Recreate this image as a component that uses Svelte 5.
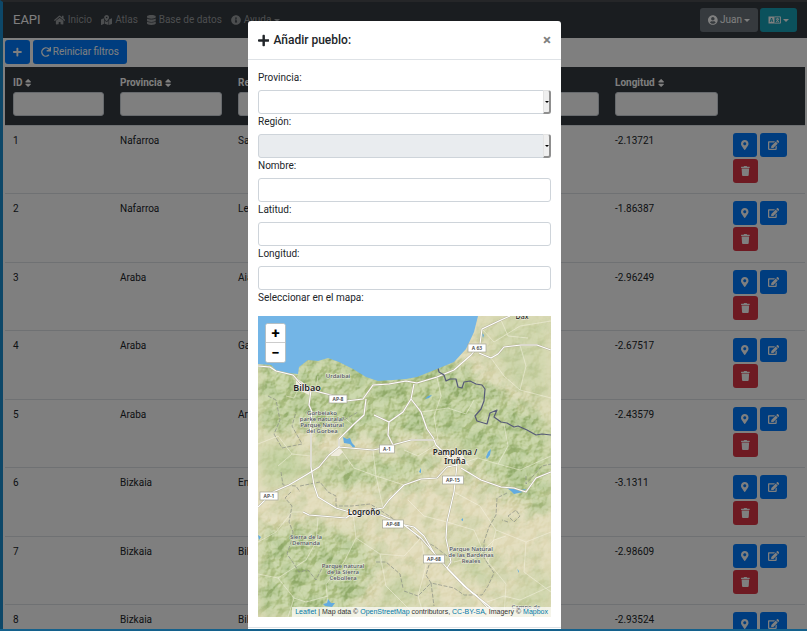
<script>
  const icons = {
    plus: ['0 0 448 512', 'M416 208H272V64c0-17.67-14.33-32-32-32h-32c-17.67 0-32 14.33-32 32v144H32c-17.67 0-32 14.33-32 32v32c0 17.67 14.33 32 32 32h144v144c0 17.67 14.33 32 32 32h32c17.67 0 32-14.33 32-32V304h144c17.67 0 32-14.33 32-32v-32c0-17.67-14.33-32-32-32z'],
    pin: ['0 0 384 512', 'M172.268 501.67C26.97 291.031 0 269.413 0 192 0 85.961 85.961 0 192 0s192 85.961 192 192c0 77.413-26.97 99.031-172.268 309.67-9.535 13.774-29.93 13.773-39.464 0zM192 272c44.183 0 80-35.817 80-80s-35.817-80-80-80-80 35.817-80 80 35.817 80 80 80z'],
    edit: ['0 0 576 512', 'M402.6 83.2l90.2 90.2c3.8 3.8 3.8 10 0 13.8L274.4 405.6l-92.8 10.3c-12.4 1.4-22.9-9.1-21.5-21.5l10.3-92.8L388.8 83.2c3.8-3.8 10-3.8 13.8 0zm162-22.9l-48.8-48.8c-15.2-15.2-39.9-15.2-55.2 0l-35.4 35.4c-3.8 3.8-3.8 10 0 13.8l90.2 90.2c3.8 3.8 10 3.8 13.8 0l35.4-35.4c15.2-15.3 15.2-40 0-55.2zM384 346.2V448H64V128h229.8c3.2 0 6.2-1.3 8.5-3.5l40-40c7.6-7.6 2.2-20.5-8.5-20.5H48C21.5 64 0 85.5 0 112v352c0 26.5 21.5 48 48 48h352c26.5 0 48-21.5 48-48V306.2c0-10.7-12.9-16-20.5-8.5l-40 40c-2.2 2.3-3.5 5.3-3.5 8.5z'],
    trash: ['0 0 448 512', 'M432 32H312l-9.4-18.7A24 24 0 0 0 281.1 0H166.8a23.72 23.72 0 0 0-21.4 13.3L136 32H16A16 16 0 0 0 0 48v32a16 16 0 0 0 16 16h416a16 16 0 0 0 16-16V48a16 16 0 0 0-16-16zM53.2 467a48 48 0 0 0 47.9 45h245.8a48 48 0 0 0 47.9-45L416 128H32z'],
    home: ['0 0 576 512', 'M280.37 148.26L96 300.11V464a16 16 0 0 0 16 16l112.06-.29a16 16 0 0 0 15.92-16V368a16 16 0 0 1 16-16h64a16 16 0 0 1 16 16v95.64a16 16 0 0 0 16 16.05L464 480a16 16 0 0 0 16-16V300L295.67 148.26a12.19 12.19 0 0 0-15.3 0zM571.6 251.47L488 182.56V44.05a12 12 0 0 0-12-12h-56a12 12 0 0 0-12 12v72.61L318.47 43a48 48 0 0 0-61 0L4.34 251.47a12 12 0 0 0-1.6 16.9l25.5 31A12 12 0 0 0 45.15 301l235.22-193.74a12.19 12.19 0 0 1 15.3 0L530.9 301a12 12 0 0 0 16.9-1.6l25.5-31a12 12 0 0 0-1.7-16.93z'],
    atlas: ['0 0 576 512', 'M288 0c-69.59 0-126 56.41-126 126 0 56.26 82.35 158.8 113.9 196.02 6.39 7.54 17.82 7.54 24.2 0C331.65 284.8 414 182.26 414 126 414 56.41 357.59 0 288 0zm0 168c-23.2 0-42-18.8-42-42s18.8-42 42-42 42 18.8 42 42-18.8 42-42 42zM20.12 215.95A32.006 32.006 0 0 0 0 245.66v250.32c0 11.32 11.43 19.06 21.94 14.86L160 448V214.92c-8.84-15.98-16.07-31.54-21.25-46.42L20.12 215.95zM288 359.67c-14.07 0-27.38-6.18-36.51-16.96-19.66-23.2-40.57-49.62-59.49-76.72v182l192 64V266c-18.92 27.09-39.82 53.52-59.49 76.72-9.13 10.77-22.44 16.95-36.51 16.95zm266.06-198.51L416 224v288l139.88-55.95A31.996 31.996 0 0 0 576 426.34V176.02c0-11.32-11.43-19.06-21.94-14.86z'],
    database: ['0 0 448 512', 'M448 73.143v45.714C448 159.143 347.667 192 224 192S0 159.143 0 118.857V73.143C0 32.857 100.333 0 224 0s224 32.857 224 73.143zM448 176v102.857C448 319.143 347.667 352 224 352S0 319.143 0 278.857V176c48.125 33.143 136.208 48.572 224 48.572S399.874 209.143 448 176zm0 160v102.857C448 479.143 347.667 512 224 512S0 479.143 0 438.857V336c48.125 33.143 136.208 48.572 224 48.572S399.874 369.143 448 336z'],
    info: ['0 0 512 512', 'M256 8C119.043 8 8 119.083 8 256c0 136.997 111.043 248 248 248s248-111.003 248-248C504 119.083 392.957 8 256 8zm0 110c23.196 0 42 18.804 42 42s-18.804 42-42 42-42-18.804-42-42 18.804-42 42-42zm56 254c0 6.627-5.373 12-12 12h-88c-6.627 0-12-5.373-12-12v-24c0-6.627 5.373-12 12-12h12v-64h-12c-6.627 0-12-5.373-12-12v-24c0-6.627 5.373-12 12-12h64c6.627 0 12 5.373 12 12v100h12c6.627 0 12 5.373 12 12v24z'],
    user: ['0 0 496 512', 'M248 8C111 8 0 119 0 256s111 248 248 248 248-111 248-248S385 8 248 8zm0 96c48.6 0 88 39.4 88 88s-39.4 88-88 88-88-39.4-88-88 39.4-88 88-88zm0 344c-58.7 0-111.3-26.6-146.5-68.2 18.8-35.4 55.6-59.8 98.5-59.8 2.4 0 4.8.4 7.1 1.1 13 4.2 26.6 6.9 40.9 6.9 14.3 0 28-2.7 40.9-6.9 2.3-.7 4.7-1.1 7.1-1.1 42.9 0 79.7 24.4 98.5 59.8C359.3 421.4 306.7 448 248 448z'],
    redo: ['0 0 512 512', 'M500.33 0h-47.41a12 12 0 0 0-12 12.57l4 82.76A247.42 247.42 0 0 0 256 8C119.34 8 7.9 119.53 8 256.19 8.1 393.07 119.1 504 256 504a247.1 247.1 0 0 0 166.18-63.91 12 12 0 0 0 .48-17.43l-34-34a12 12 0 0 0-16.38-.55A176 176 0 1 1 402.1 157.8l-101.53-4.87a12 12 0 0 0-12.57 12v47.41a12 12 0 0 0 12 12h200.33a12 12 0 0 0 12-12V12a12 12 0 0 0-12-12z'],
    sort: ['0 0 320 512', 'M41 288h238c21.4 0 32.1 25.9 17 41L177 448c-9.4 9.4-24.6 9.4-33.9 0L24 329c-15.1-15.1-4.4-41 17-41zm255-105L177 64c-9.4-9.4-24.6-9.4-33.9 0L24 183c-15.1 15.1-4.4 41 17 41h238c21.4 0 32.1-25.9 17-41z']
  };

  const columns = [
    { key: 'id', label: 'ID' },
    { key: 'provincia', label: 'Provincia' },
    { key: 'region', label: 'Región' },
    { key: 'nombre', label: 'Nombre' },
    { key: 'latitud', label: 'Latitud' },
    { key: 'longitud', label: 'Longitud' }
  ];

  const rows = [
    { id: 1, provincia: 'Nafarroa', region: 'Sakana', nombre: 'Abaigar', latitud: '42.64853', longitud: '-2.13721' },
    { id: 2, provincia: 'Nafarroa', region: 'Leitzaran', nombre: 'Abaurrea', latitud: '42.90121', longitud: '-1.86387' },
    { id: 3, provincia: 'Araba', region: 'Aiara', nombre: 'Amurrio', latitud: '43.05271', longitud: '-2.96249' },
    { id: 4, provincia: 'Araba', region: 'Gasteiz', nombre: 'Gasteiz', latitud: '42.84641', longitud: '-2.67517' },
    { id: 5, provincia: 'Araba', region: 'Arabako', nombre: 'Agurain', latitud: '42.85012', longitud: '-2.43579' },
    { id: 6, provincia: 'Bizkaia', region: 'Enkarterri', nombre: 'Balmaseda', latitud: '43.19462', longitud: '-3.1311' },
    { id: 7, provincia: 'Bizkaia', region: 'Bilboaldea', nombre: 'Barakaldo', latitud: '43.29639', longitud: '-2.98609' },
    { id: 8, provincia: 'Bizkaia', region: 'Bilboaldea', nombre: 'Bilbao', latitud: '43.26271', longitud: '-2.93524' }
  ];

  const fields = [
    { id: 'nombre', label: 'Nombre:' },
    { id: 'latitud', label: 'Latitud:' },
    { id: 'longitud', label: 'Longitud:' }
  ];

  const land = 'M0 48L13 49L18 54L31 57L40 58L41 51L50 44L60 45L70 42L81 46L95 53L108 61L120 65L135 64L148 63L159 61L179 53L196 46L208 33L216 16L220 0H293V301H0Z';

  const roads = [
    'M0 50L12 51L18 55L35 59L43 68L53 74L73 79L88 85L105 83L115 69L131 68L148 65L159 67L179 61L196 54L213 39L222 28L224 13L243 4L252 0',
    'M221 37L233 42L240 38L246 31L263 29L279 29L293 34',
    'M53 74L51 89L54 96L52 109L53 119L53 151L56 169L60 181L78 192L95 197L123 199L146 209L163 222L176 237L189 252L213 276L226 286L238 296',
    'M0 191L15 176L31 169L48 159L61 151L71 139L81 131L115 134L125 132L138 128L153 124L176 124L178 129L199 149',
    'M81 131L81 123L95 109L106 99L108 83',
    'M116 99L131 106L130 119L135 129M131 106L145 96L153 83L156 68M153 83L163 96L169 113L176 123',
    'M95 197L125 192L131 184L146 169L163 163L179 162L189 151L199 149L196 176L189 206L188 222L193 246L189 252',
    'M203 152L223 164L243 171L256 172L268 176L278 162L293 156',
    'M45 196L51 199L88 202L95 197',
    'M176 237L166 220L156 211L142 208M189 252L206 270L219 280L230 292'
  ];

  const lanes = [
    'M58 74L60 60M43 68L36 82L28 80M95 109L84 100M179 61L183 80L176 100L180 124M163 96L190 92L208 98L216 84',
    'M224 13L236 26L262 10L293 5M233 42L246 60L262 74L293 82M262 29L268 50L262 74M243 4L250 20L270 22',
    'M0 128L20 120L34 138L53 140M20 150L34 138M0 226L18 216L34 196L45 196M60 202L58 226L48 244L20 262L0 258',
    'M95 197L98 222L86 246L68 268L70 290M98 222L122 238L146 240L163 222M122 238L128 270L152 294M20 262L36 282L30 301M70 280L48 286L36 282',
    'M189 206L166 200L150 184M196 176L222 190L238 214L268 226L293 216M238 214L230 246L248 268L246 301M268 226L266 256L293 276M189 206L216 214L230 246',
    'M199 149L220 142L240 148L250 130L246 108M240 148L262 154L293 140M178 129L160 140L146 134M115 134L118 160L146 169M81 131L96 152L118 160L125 192',
    'M229 286L246 280L262 284L293 270M163 222L168 250L160 280L166 301M196 246L220 240L236 224L248 220'
  ];

  const limits = [
    'M23 156L25 169L38 170L42 176M33 176L27 182L34 190L31 206L35 216L33 226L29 238L36 248L41 256L50 254L58 264L64 252',
    'M118 246L128 246L135 252L142 258L145 272M42 170L62 166L70 176L78 180L78 190L94 190L112 188L122 194L140 206L152 212L160 222L176 230L189 240',
    'M249 177L239 182L238 199L231 211L226 226L226 242L236 257L230 270L224 279L206 279L196 272L173 267L168 259L171 249L182 240M146 275L160 280L173 267L176 290',
    'M10 80L18 84L22 104L16 118L24 132L44 128L34 110L38 96M60 112L86 104L100 96M268 160L268 168L284 150L293 148M250 200l8-6l4 6l-6 6zM250 206l-6 -2'
  ];

  const shields = [
    { x: 80, y: 83, w: 18, t: 'AP-8' },
    { x: 219, y: 32, w: 18, t: 'A 63' },
    { x: 129, y: 133, w: 15, t: 'A-1' },
    { x: 11, y: 180, w: 18, t: 'AP-1' },
    { x: 195, y: 164, w: 21, t: 'AP-15' },
    { x: 135, y: 208, w: 21, t: 'AP-68' },
    { x: 176, y: 243, w: 21, t: 'AP-68' }
  ];

  const places = [
    { x: 49, y: 75, t: 'Bilbao', city: true },
    { x: 106, y: 199, t: 'Logroño' },
    { x: 197, y: 139, t: 'Pamplona /' },
    { x: 197, y: 148, t: 'Iruña' }
  ];

  const parks = [
    { x: 80, y: 62, t: 'Urdaibai' },
    { x: 64, y: 99, t: 'Gorbeiako' },
    { x: 64, y: 105, t: 'parke naturala/' },
    { x: 64, y: 111, t: 'Parque Natural' },
    { x: 64, y: 117, t: 'del Gorbea' },
    { x: 48, y: 223, t: 'Sierra de la' },
    { x: 48, y: 229, t: 'Demanda' },
    { x: 85, y: 252, t: 'Parque natural' },
    { x: 85, y: 258, t: 'de la Sierra' },
    { x: 85, y: 264, t: 'Cebollera' },
    { x: 213, y: 235, t: 'Parque Natural' },
    { x: 213, y: 241, t: 'de las Bardenas' },
    { x: 213, y: 247, t: 'Reales' },
    { x: 268, y: 293, t: 'Campo de' }
  ];
</script>

{#snippet icon(name)}
  <svg class="icon" viewBox={icons[name][0]} aria-hidden="true"><path d={icons[name][1]} /></svg>
{/snippet}

<div class="app">
  <header class="navbar">
    <a class="brand" href="#inicio">EAPI</a>
    <nav>
      <a href="#inicio">{@render icon('home')} Inicio</a>
      <a href="#atlas">{@render icon('atlas')} Atlas</a>
      <a href="#datos">{@render icon('database')} Base de datos</a>
      <a href="#ayuda">{@render icon('info')} Ayuda <span class="caret"></span></a>
    </nav>
    <button class="btn grey">{@render icon('user')} Juan <span class="caret"></span></button>
    <button class="btn teal" aria-label="Idioma">
      <svg class="lang" viewBox="0 0 26 16" aria-hidden="true">
        <path fill-rule="evenodd" d="M1 1H13V15H1ZM6 4L3.4 12H5.2L5.7 10.4H8.4L8.9 12H10.700L8.100 4ZM7 6L8 9H6.200Z" />
        <path d="M13 1.700H25V14.300H13M19 3.500V5.500M15.500 6H22.500M21 6Q20 10 16 12M17 6.500Q18 10 22 12" fill="none" stroke="currentColor" stroke-width="1.800" />
      </svg>
      <span class="caret"></span>
    </button>
  </header>

  <div class="toolbar">
    <button class="btn blue" aria-label="Añadir">{@render icon('plus')}</button>
    <button class="btn blue">{@render icon('redo')} Reiniciar filtros</button>
  </div>

  <table>
    <colgroup>
      {#each columns as c}<col class={c.key} />{/each}
      <col class="actions" />
    </colgroup>
    <thead>
      <tr>
        {#each columns as c}
          <th>
            <label for="filtro-{c.key}">{c.label} {@render icon('sort')}</label>
            <input id="filtro-{c.key}" type="text" />
          </th>
        {/each}
        <th></th>
      </tr>
    </thead>
    <tbody>
      {#each rows as r}
        <tr>
          {#each columns as c}<td>{r[c.key]}</td>{/each}
          <td>
            <div class="tools">
              <button class="btn blue" aria-label="Ver en el mapa">{@render icon('pin')}</button>
              <button class="btn blue" aria-label="Editar">{@render icon('edit')}</button>
              <button class="btn red" aria-label="Borrar">{@render icon('trash')}</button>
            </div>
          </td>
        </tr>
      {/each}
    </tbody>
  </table>
</div>

<div class="backdrop">
  <div class="modal" role="dialog" aria-labelledby="titulo" aria-modal="true">
    <div class="modal-head">
      <h1 id="titulo">{@render icon('plus')} Añadir pueblo:</h1>
      <button class="close" aria-label="Cerrar">×</button>
    </div>
    <form class="modal-body">
      <label for="provincia">Provincia:</label>
      <div class="combo">
        <select id="provincia"><option></option></select>
        <span class="drop"></span>
      </div>
      <label for="region">Región:</label>
      <div class="combo">
        <select id="region" disabled><option></option></select>
        <span class="drop"></span>
      </div>
      {#each fields as f}
        <label for={f.id}>{f.label}</label>
        <input id={f.id} type="text" />
      {/each}
      <p>Seleccionar en el mapa:</p>
      <div class="map">
        <svg viewBox="0 0 293 301" preserveAspectRatio="xMidYMid slice" role="img" aria-label="Mapa">
          <defs>
            <clipPath id="land"><path d={land} /></clipPath>
            <filter id="soft" x="-20%" y="-20%" width="140%" height="140%"><feGaussianBlur stdDeviation="8" /></filter>
            <filter id="woods" x="0" y="0" width="100%" height="100%">
              <feTurbulence type="fractalNoise" baseFrequency="0.06" numOctaves="4" seed="8" result="n" />
              <feColorMatrix in="n" values="0 0 0 0 0  0 0 0 0 0  0 0 0 0 0  4 0 0 0 -1.700" result="m" />
              <feComposite in="SourceGraphic" in2="m" operator="in" />
            </filter>
            <filter id="relief" x="0" y="0" width="100%" height="100%" color-interpolation-filters="sRGB">
              <feTurbulence type="fractalNoise" baseFrequency="0.09" numOctaves="4" seed="21" result="n" />
              <feColorMatrix in="n" values="0 0 0 0 0  0 0 0 0 0  0 0 0 0 0  1 0 0 0 0" />
              <feDiffuseLighting surfaceScale="7" diffuseConstant="0.8" lighting-color="#ffffff">
                <feDistantLight azimuth="225" elevation="42" />
              </feDiffuseLighting>
            </filter>
            <mask id="hills">
              <g filter="url(#soft)" fill="#fff">
                <rect width="293" height="301" fill="#606060" />
                <path d="M0 40H190L293 100V160L200 125L100 122L60 125L0 110Z" />
                <path d="M0 205L50 210L110 225L120 260L90 301H0Z" />
                <path d="M60 150L190 140L160 168L80 172Z" />
                <path d="M200 150L293 130V200L260 190Z" />
              </g>
            </mask>
          </defs>
          <rect width="293" height="301" fill="#73b5e6" />
          <g clip-path="url(#land)">
            <rect width="293" height="301" fill="#e3ddbd" />
            <g filter="url(#soft)" fill="#c3d1a0">
              <path d="M0 40H190L230 70L293 105V150L230 150L180 120L100 118L50 112L0 116Z" />
              <path d="M0 215L50 208L110 225L116 255L90 301H0Z" />
              <path d="M60 148L180 138L160 165L80 170L50 165Z" />
              <path d="M215 152L293 135V195L262 185Z" />
              <path d="M225 0H293V90L240 60Z" opacity="0.6" />
              <path d="M0 130L40 130L50 160L10 170Z" />
              <path d="M190 215L225 225L240 265L205 262Z" opacity="0.6" />
              <path d="M250 275L293 250V301H250Z" opacity="0.6" />
              <path d="M130 255L160 262V296L120 301Z" opacity="0.6" />
            </g>
            <g filter="url(#woods)"><rect width="293" height="301" fill="#a3bc82" opacity="0.6" mask="url(#hills)" /></g>
            <g mask="url(#hills)" class="relief"><rect width="293" height="301" filter="url(#relief)" /></g>
            <g class="lanes">{#each lanes as d}<path {d} />{/each}</g>
            <g class="limits">{#each limits as d}<path {d} />{/each}</g>
            <g class="water">
              <path d="M85 121l4 2l3 -1l2 5l3 3l-1 3l-4 -5l-6 -1z" />
              <path d="M249 172l8 0l5 2l6 -1l-3 3l-9 2l-3 -3z" />
              <path d="M65 288l4 -1l1 -4l3 4l4 0l-3 4l-7 -1z" />
              <path d="M228 141l2 -5l3 -3l-1 6l-3 4z" />
              <path d="M167 83l3 -3l4 -1l-3 3z" />
              <path d="M203 204l2 -2v3zM259 253l2 2v2zM0 219l3 2l-2 3zM161 156l2 -4v5zM224 17l2 2l-1 3z" />
            </g>
            <path class="urban" d="M38 62l5 3l8 6l4 4l-4 4l-8 -4l-5 -6zM74 135l7 -3l4 4l-4 4l-8 0zM189 133l14 3l8 14l-8 -4l-12 -2zM88 196l12 0l2 4l-10 1z" />
            <g class="casing">{#each roads as d}<path {d} />{/each}</g>
            <g class="roads">{#each roads as d}<path {d} />{/each}</g>
            <path class="frontier" d="M180 52L181 56L186 59L188 65L192 63L198 63L200 71L204 72L206 66L212 65L218 68L224 69L227 73L226 85L223 93L217 100L219 105L229 108L232 97L239 94L236 101L243 106L249 107L256 111L260 110L269 114L278 119L284 118L293 119" />
          </g>
          <g class="parks">{#each parks as p}<text x={p.x} y={p.y}>{p.t}</text>{/each}</g>
          {#each shields as s}
            <rect class="shield" x={s.x - s.w / 2} y={s.y - 4} width={s.w} height="8" />
            <text class="ref" x={s.x} y={s.y + 2}>{s.t}</text>
          {/each}
          <g class="places">{#each places as p}<text class:city={p.city} x={p.x} y={p.y}>{p.t}</text>{/each}</g>
          <text class="dax" x="264" y="3">Dax</text>
        </svg>
        <div class="zoom">
          <button type="button" aria-label="Acercar">+</button>
          <button type="button" aria-label="Alejar">−</button>
        </div>
        <div class="credit">
          <a href="#leaflet">Leaflet</a> | Map data © <a href="#osm">OpenStreetMap</a> contributors, <a href="#cc">CC-BY-SA</a>, Imagery © <a href="#mapbox">Mapbox</a>
        </div>
      </div>
    </form>
    <div class="modal-foot"></div>
  </div>
</div>
<div class="edge"></div>

<style>
  :global(body) {
    margin: 0;
    overflow: hidden;
    background: #fff;
  }
  .app, .backdrop {
    font-family: Roboto, "Liberation Sans", sans-serif;
    font-size: 10px;
    line-height: 16px;
    color: #212529;
  }
  .app, .app *, .backdrop, .backdrop * {
    box-sizing: border-box;
  }
  button, input, select {
    font: inherit;
    margin: 0;
  }
  a {
    text-decoration: none;
  }
  .app {
    height: 100vh;
    overflow: hidden;
    border-top: 2px solid #4a4d50;
    border-left: 3px solid #1a8fd0;
  }
  .icon {
    height: 1em;
    flex: none;
    fill: currentColor;
  }
  .caret {
    border: 3px solid transparent;
    border-top-color: currentColor;
    border-bottom: 0;
  }
  .navbar {
    height: 36px;
    padding: 0 10px;
    display: flex;
    align-items: center;
    gap: 2px;
    background: #343a40;
  }
  .brand {
    font-size: 13px;
    color: #fff;
  }
  nav {
    flex: 1;
    display: flex;
    gap: 9px;
    margin-left: 11px;
  }
  nav a {
    display: flex;
    align-items: center;
    gap: 3px;
    color: #999c9f;
  }
  .btn {
    height: 24px;
    padding: 0 8px;
    display: flex;
    align-items: center;
    gap: 2px;
    border: 0;
    border-radius: 3px;
    color: #fff;
  }
  .blue { background: #007bff; }
  .grey { background: #6c757d; }
  .teal { background: #17a2b8; }
  .red { background: #dc3545; }
  .lang {
    width: 13px;
    height: 8px;
    fill: currentColor;
  }
  .toolbar {
    display: flex;
    gap: 3px;
    padding: 2px;
  }
  table {
    width: calc(100% - 4px);
    margin: 1px 2px 0;
    border-collapse: collapse;
    table-layout: fixed;
  }
  col.id { width: 107px; }
  col.provincia { width: 118px; }
  col.longitud { width: 119px; }
  col.actions { width: 79px; }
  thead {
    height: 58px;
    background: #343a40;
    color: #fff;
  }
  th, td {
    padding: 8px;
    text-align: left;
    vertical-align: top;
  }
  th {
    padding-bottom: 0;
  }
  th label {
    display: flex;
    align-items: center;
    gap: 3px;
  }
  input, select {
    display: block;
    width: 100%;
    height: 24px;
    padding: 0 8px;
    border: 1px solid #ced4da;
    border-radius: 3px;
    background: #fff;
  }
  th input {
    margin-top: 1px;
  }
  tbody tr {
    height: 68px;
    border-top: 1px solid #dee2e6;
  }
  tbody tr:nth-child(even) {
    height: 69px;
  }
  tbody td {
    padding-top: 7px;
  }
  tbody td:last-child {
    padding: 7px;
  }
  .tools {
    display: flex;
    flex-wrap: wrap;
    gap: 2px 3px;
  }
  .backdrop {
    position: fixed;
    inset: 0;
    padding: 21px 0 0 2px;
    overflow: hidden;
    background: rgba(0, 0, 0, 0.5);
  }
  .modal {
    max-width: 313px;
    margin: 0 auto;
    border-radius: 3px;
    background: #fff;
  }
  .modal-head {
    height: 39px;
    padding: 0 10px;
    display: flex;
    align-items: center;
    justify-content: space-between;
    border-bottom: 1px solid #dee2e6;
  }
  h1 {
    margin: 0;
    display: flex;
    align-items: center;
    gap: 4px;
    font-size: 12px;
    font-weight: 500;
  }
  h1 .icon {
    height: 13px;
  }
  .close {
    padding: 0;
    border: 0;
    background: none;
    font-size: 15px;
    font-weight: 700;
    color: #7f7f7f;
  }
  .modal-body {
    padding: 10px;
  }
  .modal-body label, p {
    display: block;
    margin: 0 0 4px;
  }
  .combo {
    position: relative;
  }
  select {
    appearance: none;
    opacity: 1;
  }
  select:disabled {
    background: #e9ecef;
  }
  .drop {
    position: absolute;
    top: 0;
    right: 0;
    width: 8px;
    height: 24px;
    display: flex;
    align-items: center;
    justify-content: center;
    border: 1px solid #e3e3e3;
    border-right: 2px solid #8f8f8f;
    border-bottom: 2px solid #8f8f8f;
    border-radius: 0 3px 3px 0;
    background: #efefef;
    pointer-events: none;
  }
  .drop::after {
    content: "";
    border: 2px solid transparent;
    border-top-color: #000;
    border-bottom: 0;
  }
  .map {
    position: relative;
    height: 301px;
    margin-top: 10px;
    overflow: hidden;
  }
  .map svg {
    display: block;
    width: 100%;
    height: 100%;
  }
  .relief {
    mix-blend-mode: soft-light;
    opacity: 0.6;
  }
  .lanes, .casing, .roads, .limits {
    fill: none;
    stroke-linejoin: round;
  }
  .lanes { stroke: #f8f5e6; stroke-width: 0.6; opacity: 0.8; }
  .casing { stroke: #b9b59c; stroke-width: 2; }
  .roads { stroke: #fff; stroke-width: 1.1; }
  .limits { stroke: #8b8f86; stroke-width: 0.7; stroke-dasharray: 4 1.5; }
  .water { fill: #62abe0; }
  .urban { fill: #efebdd; }
  .frontier { fill: none; stroke: #575b78; stroke-width: 1.2; stroke-linejoin: round; }
  .map text {
    font-family: "Noto Sans", "Open Sans", sans-serif;
    text-anchor: middle;
    paint-order: stroke;
    stroke: rgba(255, 255, 255, 0.6);
    stroke-width: 1;
  }
  .parks text { font-size: 6px; font-weight: 500; fill: #4d5059; }
  .places text, .map .dax { font-size: 8px; font-weight: 600; fill: #222; }
  .places .city { font-size: 9px; }
  .map .dax { font-size: 7px; font-weight: 500; }
  .map .ref { font-size: 5px; font-weight: 600; fill: #444; }
  .shield { fill: #fff; stroke: #a5a596; stroke-width: 0.7; }
  .zoom {
    position: absolute;
    top: 7px;
    left: 7px;
    border: 1px solid #b4bfc4;
    border-radius: 3px;
    overflow: hidden;
    background: #fff;
  }
  .zoom button {
    display: block;
    width: 19px;
    height: 19px;
    padding: 0;
    border: 0;
    background: #fff;
    font-size: 15px;
    font-weight: 700;
    line-height: 18px;
    color: #000;
  }
  .zoom button:first-child {
    border-bottom: 1px solid #ccc;
  }
  .credit {
    position: absolute;
    right: 0;
    bottom: 0;
    padding: 0 3px;
    background: rgba(255, 255, 255, 0.7);
    font-family: "Liberation Sans", Arial, sans-serif;
    font-size: 7px;
    line-height: 10px;
    white-space: nowrap;
    color: #333;
  }
  .credit a {
    color: #0078a8;
  }
  .modal-foot {
    height: 40px;
    border-top: 1px solid #dee2e6;
  }
  .edge {
    position: fixed;
    left: 0;
    right: 0;
    bottom: 0;
    height: 2px;
    background: #14618c;
  }
</style>
